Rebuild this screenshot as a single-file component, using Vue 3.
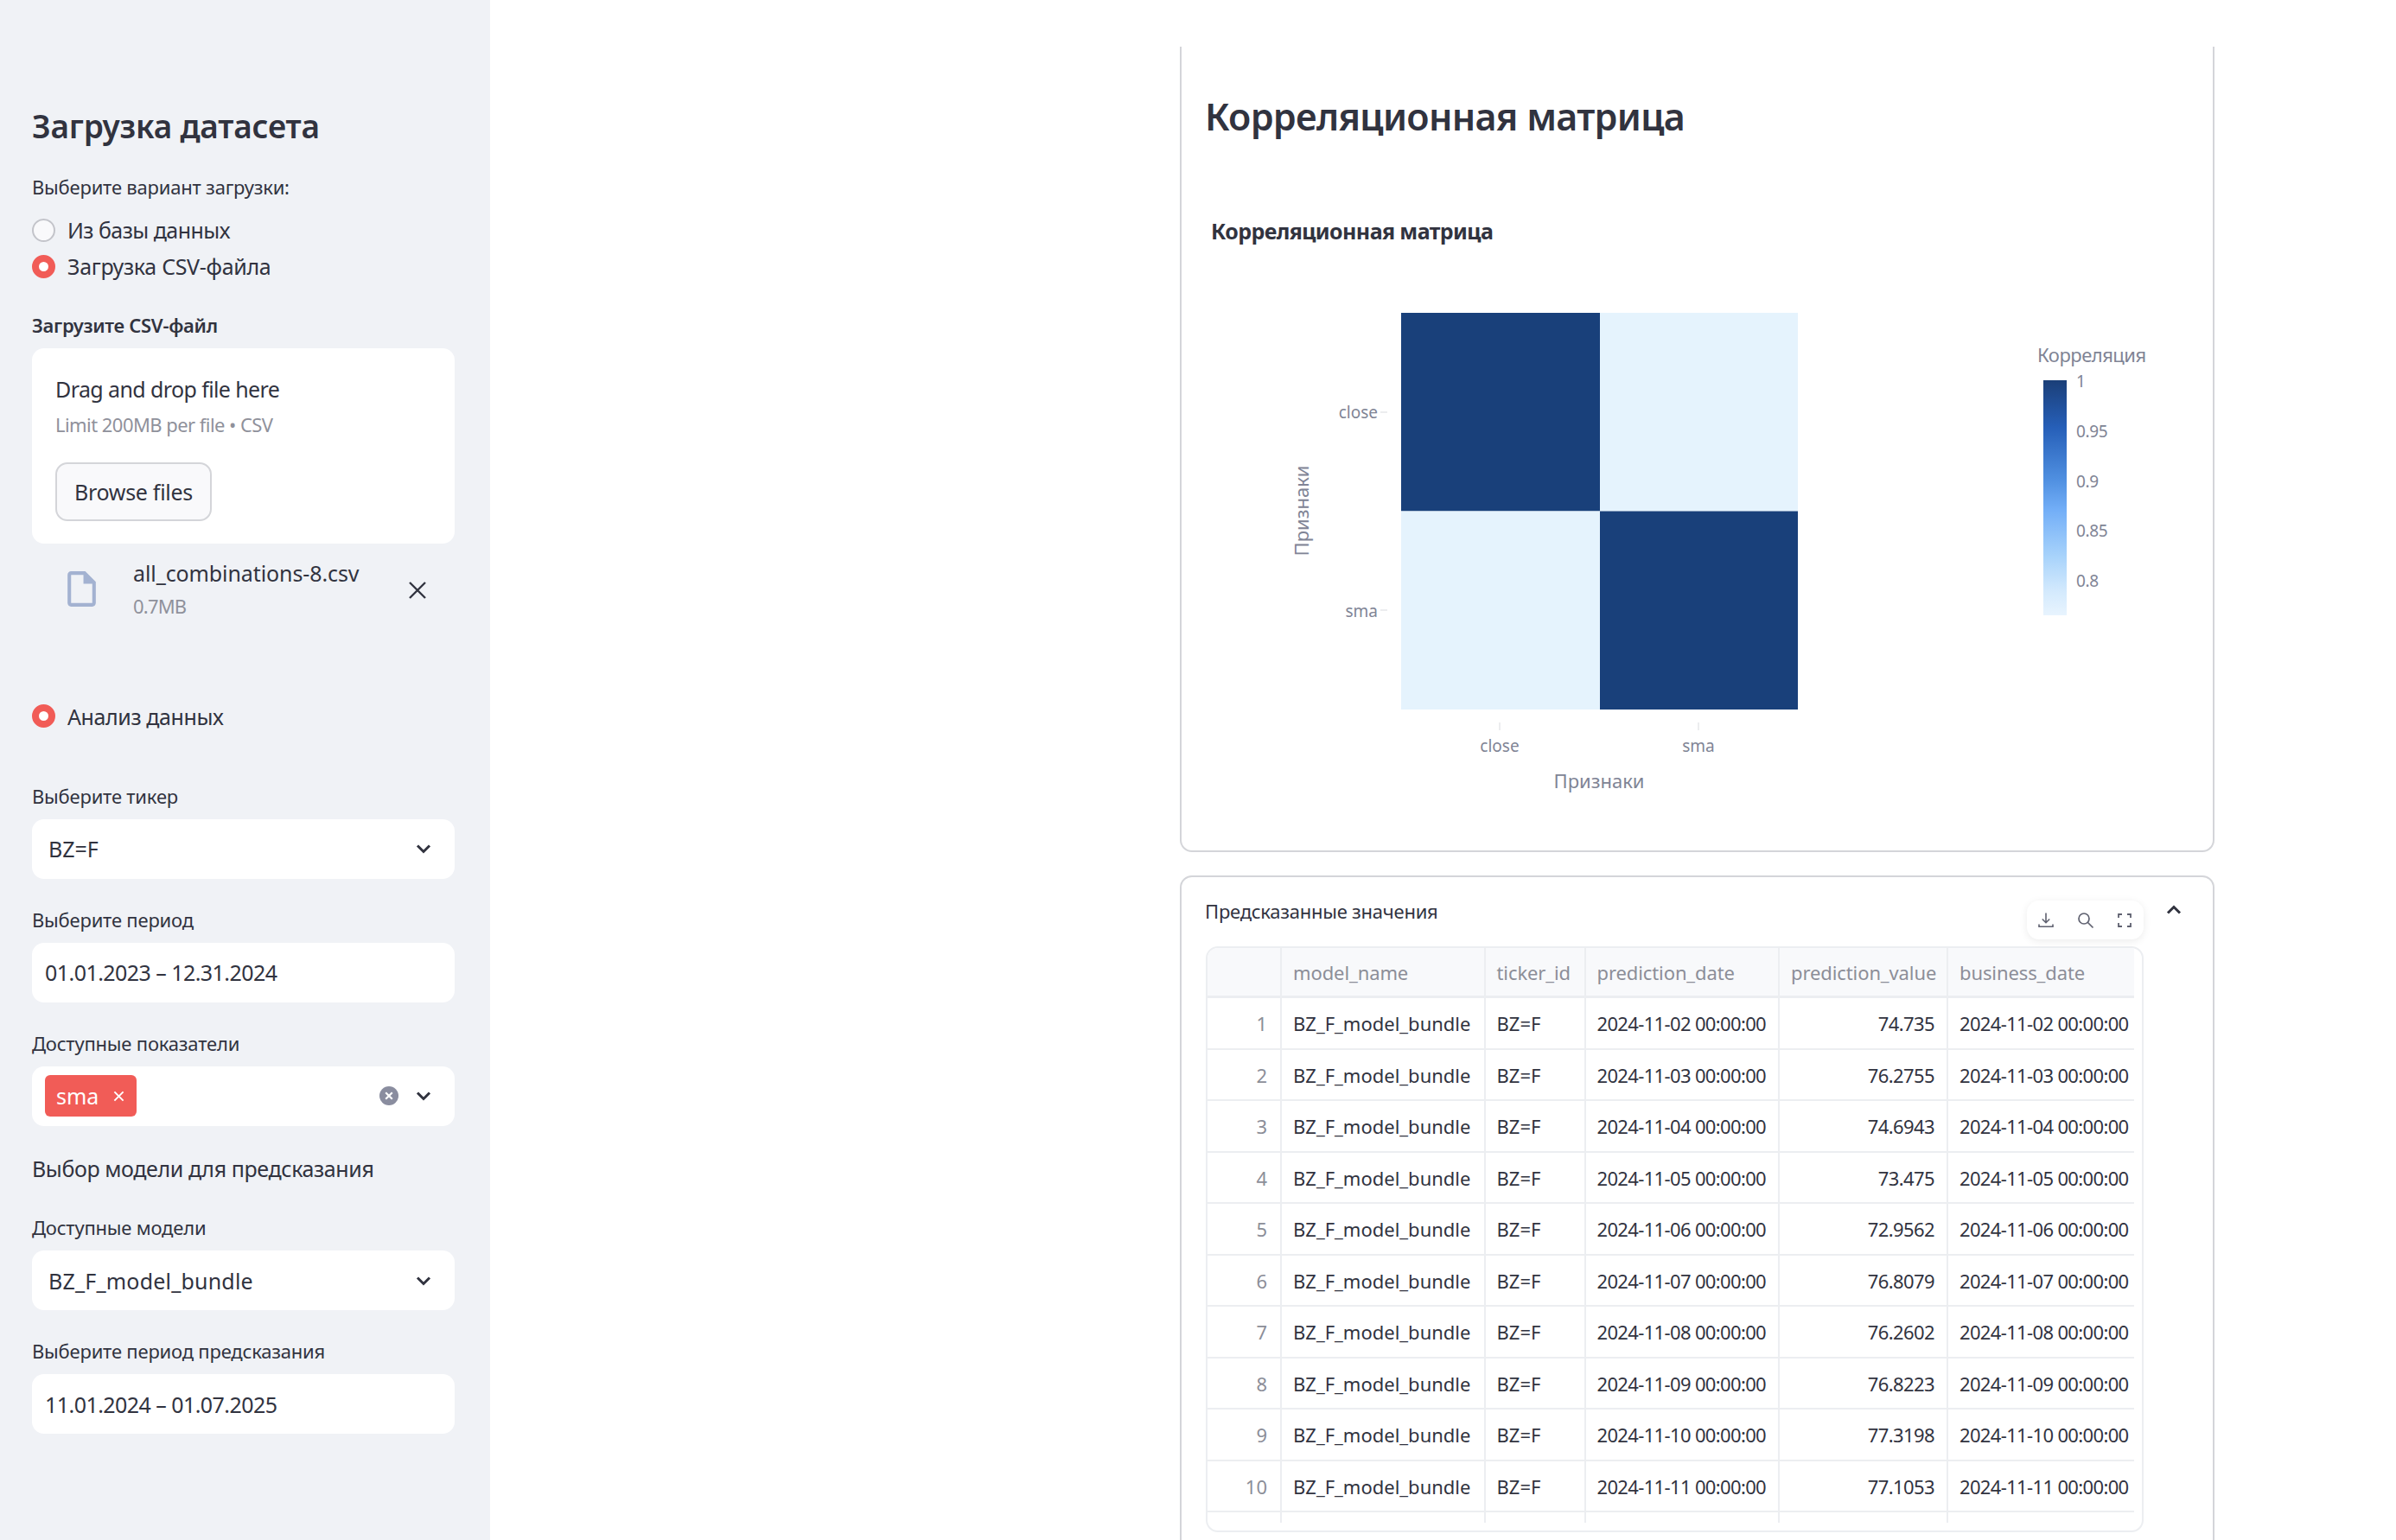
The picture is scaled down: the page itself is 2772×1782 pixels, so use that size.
<script setup>
const predictions = [
  ['2024-11-02 00:00:00', '74.735'],
  ['2024-11-03 00:00:00', '76.2755'],
  ['2024-11-04 00:00:00', '74.6943'],
  ['2024-11-05 00:00:00', '73.475'],
  ['2024-11-06 00:00:00', '72.9562'],
  ['2024-11-07 00:00:00', '76.8079'],
  ['2024-11-08 00:00:00', '76.2602'],
  ['2024-11-09 00:00:00', '76.8223'],
  ['2024-11-10 00:00:00', '77.3198'],
  ['2024-11-11 00:00:00', '77.1053'],
];
const columns = ['', 'model_name', 'ticker_id', 'prediction_date', 'prediction_value', 'business_date'];
const legendTicks = [
  { label: '1', y: 448 },
  { label: '0.95', y: 506 },
  { label: '0.9', y: 564 },
  { label: '0.85', y: 621 },
  { label: '0.8', y: 679 },
];
</script>

<template>
  <div class="page">
    <aside class="sidebar">
      <h2 class="side-title">Загрузка датасета</h2>

      <div class="label first">Выберите вариант загрузки:</div>
      <div class="radios">
        <div class="radio-row tight"><span class="radio"></span>Из базы данных</div>
        <div class="radio-row"><span class="radio on"></span>Загрузка CSV-файла</div>
      </div>

      <div class="label strong">Загрузите CSV-файл</div>
      <div class="dropzone">
        <div class="drop-title">Drag and drop file here</div>
        <div class="drop-hint">Limit 200MB per file • CSV</div>
        <button class="browse">Browse files</button>
      </div>
      <div class="file-row">
        <svg class="file-icon" viewBox="0 0 24 24" fill="#a3b2d1">
          <path d="M14 2H6c-1.1 0-2 .9-2 2v16c0 1.1.9 2 2 2h12c1.1 0 2-.9 2-2V8l-6-6zM6 20V4h7v5h5v11H6z" />
        </svg>
        <div class="file-info">
          <div class="file-name">all_combinations-8.csv</div>
          <div class="file-size">0.7MB</div>
        </div>
        <svg class="file-x" viewBox="0 0 20 20" fill="none" stroke="#31333f" stroke-width="2.4">
          <path d="M1 1l18 18M19 1L1 19" />
        </svg>
      </div>

      <div class="radio-row analysis"><span class="radio on"></span>Анализ данных</div>

      <div class="label ticker">Выберите тикер</div>
      <div class="control select">
        <span>BZ=F</span>
        <svg class="chevron" viewBox="0 0 18 12" fill="none" stroke="#31333f" stroke-width="3"><path d="M2 2.5l7 7 7-7" /></svg>
      </div>

      <div class="label">Выберите период</div>
      <div class="control date">01.01.2023 – 12.31.2024</div>

      <div class="label">Доступные показатели</div>
      <div class="control multi">
        <span class="chip">sma<svg viewBox="0 0 14 14" fill="none" stroke="#fff" stroke-width="2"><path d="M1.5 1.5l11 11M12.5 1.5l-11 11" /></svg></span>
        <svg class="clear" viewBox="0 0 22 22">
          <circle cx="11" cy="11" r="11" fill="#8a8d9f" />
          <path d="M7.2 7.2l7.6 7.6M14.8 7.2l-7.6 7.6" stroke="#fff" stroke-width="2.2" />
        </svg>
        <svg class="chevron" viewBox="0 0 18 12" fill="none" stroke="#31333f" stroke-width="3"><path d="M2 2.5l7 7 7-7" /></svg>
      </div>

      <div class="section">Выбор модели для предсказания</div>

      <div class="label">Доступные модели</div>
      <div class="control select">
        <span class="model">BZ_F_model_bundle</span>
        <svg class="chevron" viewBox="0 0 18 12" fill="none" stroke="#31333f" stroke-width="3"><path d="M2 2.5l7 7 7-7" /></svg>
      </div>

      <div class="label">Выберите период предсказания</div>
      <div class="control date">11.01.2024 – 01.07.2025</div>
    </aside>

    <main class="main">
      <section class="card chart-card">
        <h1 class="card-title">Корреляционная матрица</h1>
        <svg class="chart" viewBox="1367 200 1193 784">
          <defs>
            <linearGradient id="blues" x1="0" y1="0" x2="0" y2="1">
              <stop offset="0" stop-color="#1b3f78" />
              <stop offset="0.2" stop-color="#265fb8" />
              <stop offset="0.42" stop-color="#4f8fe0" />
              <stop offset="0.55" stop-color="#72aef7" />
              <stop offset="0.75" stop-color="#a8d3fb" />
              <stop offset="0.9" stop-color="#d4eafd" />
              <stop offset="1" stop-color="#e8f4fe" />
            </linearGradient>
          </defs>
          <text class="chart-title" x="1401" y="277">Корреляционная матрица</text>

          <rect x="1621" y="362" width="230" height="229.5" fill="#19407a" />
          <rect x="1851" y="362" width="229" height="229.5" fill="#e5f3fd" />
          <rect x="1621" y="591.5" width="230" height="229.5" fill="#e5f3fd" />
          <rect x="1851" y="591.5" width="229" height="229.5" fill="#19407a" />

          <path d="M1597 477h8M1597 706h8M1735 836v9M1965 836v9" stroke="#e6e7ea" stroke-width="1.5" />
          <text class="tick" x="1594" y="484" text-anchor="end">close</text>
          <text class="tick" x="1594" y="714" text-anchor="end">sma</text>
          <text class="tick" x="1735" y="870" text-anchor="middle">close</text>
          <text class="tick" x="1965" y="870" text-anchor="middle">sma</text>
          <text class="axis" x="1850" y="912" text-anchor="middle">Признаки</text>
          <text class="axis" transform="translate(1514 591) rotate(-90)" text-anchor="middle">Признаки</text>

          <text class="axis legend-title" x="2357" y="419">Корреляция</text>
          <rect x="2364" y="440" width="27" height="272" fill="url(#blues)" />
          <text v-for="t in legendTicks" :key="t.label" class="tick legend-tick" x="2402" :y="t.y">{{ t.label }}</text>
        </svg>
      </section>

      <section class="card table-card">
        <div class="table-title">Предсказанные значения</div>

        <div class="toolbar">
          <svg viewBox="0 0 20 20" fill="none" stroke="#5f6170" stroke-width="1.6">
            <path d="M10 1.5v11M5.8 8.5l4.2 4.2 4.2-4.2M2 14.5v2.7h16v-2.7" />
          </svg>
          <svg viewBox="0 0 20 20" fill="none" stroke="#5f6170" stroke-width="1.7">
            <circle cx="8" cy="8" r="6" />
            <path d="M12.5 12.5l6 6" />
          </svg>
          <svg viewBox="0 0 20 20" fill="none" stroke="#5f6170" stroke-width="1.8">
            <path d="M3 7V3h4M13 3h4v4M17 13v4h-4M7 17H3v-4" />
          </svg>
        </div>
        <svg class="collapse" viewBox="0 0 18 12" fill="none" stroke="#31333f" stroke-width="3"><path d="M2 9.5l7-7 7 7" /></svg>

        <div class="table-frame">
          <div class="table">
            <div class="row head">
              <div v-for="c in columns" :key="c" class="cell">{{ c }}</div>
            </div>
            <div v-for="(p, i) in predictions" :key="p[0]" class="row">
              <div class="cell idx">{{ i + 1 }}</div>
              <div class="cell">BZ_F_model_bundle</div>
              <div class="cell">BZ=F</div>
              <div class="cell stamp">{{ p[0] }}</div>
              <div class="cell num">{{ p[1] }}</div>
              <div class="cell stamp">{{ p[0] }}</div>
            </div>
            <div class="row">
              <div v-for="n in 6" :key="n" class="cell"></div>
            </div>
          </div>
        </div>
      </section>
    </main>
  </div>
</template>

<style>
html, body {
  margin: 0;
  overflow: hidden;
  background: #fff;
}
</style>

<style scoped>
.page {
  display: flex;
  width: 2772px;
  height: 1782px;
  overflow: hidden;
  font-family: "Noto Sans", "Liberation Sans", sans-serif;
  color: #31333f;
}

/* SIDEBAR */
.sidebar {
  box-sizing: border-box;
  width: 567px;
  flex-shrink: 0;
  padding: 121px 41px 0 37px;
  background: #f0f2f6;
}

.side-title {
  margin: 0 0 1px;
  font-size: 37px;
  line-height: 50px;
  font-weight: 600;
  letter-spacing: -0.2px;
}

.label {
  margin-top: 30.2px;
  padding-bottom: 1.5px;
  font-size: 22px;
  line-height: 34px;
  letter-spacing: -0.2px;
}

.label.first {
  margin-top: 27.5px;
}

.label.strong {
  margin-top: 29.5px;
  font-weight: 600;
  letter-spacing: -0.3px;
}

.label.ticker {
  margin-top: 54.5px;
}

.radios {
  margin-top: 11px;
}

.radio-row {
  display: flex;
  align-items: center;
  gap: 14px;
  height: 42px;
  font-size: 25px;
  letter-spacing: -0.3px;
}

.radio-row.tight {
  letter-spacing: -0.55px;
}

.radio-row.analysis {
  margin-top: 88.5px;
  letter-spacing: -0.4px;
}

.radio {
  box-sizing: border-box;
  width: 27px;
  height: 27px;
  border: 2px solid #c3c4ca;
  border-radius: 50%;
  background: #f9f9fb;
}

.radio.on {
  border: 8.5px solid #f15c57;
  background: #fff;
}

.dropzone {
  box-sizing: border-box;
  height: 226px;
  margin-top: 9px;
  padding: 29px 27px 0;
  border-radius: 14px;
  background: #fff;
}

.drop-title {
  padding-bottom: 2px;
  font-size: 25px;
  line-height: 36px;
  letter-spacing: -0.6px;
}

.drop-hint {
  margin-top: 5px;
  padding-bottom: 2px;
  font-size: 22px;
  line-height: 32px;
  letter-spacing: -0.55px;
  color: #8f919b;
}

.browse {
  display: block;
  box-sizing: border-box;
  width: 181px;
  height: 68px;
  margin-top: 26px;
  padding: 0;
  border: 2px solid #d4d5d9;
  border-radius: 14px;
  background: #f9f9fb;
  font: inherit;
  font-size: 25px;
  letter-spacing: -0.3px;
  color: #31333f;
}

.file-row {
  display: flex;
  align-items: center;
  margin-top: 18px;
  padding: 0 33px;
}

.file-icon {
  width: 49px;
  height: 49px;
  margin-top: -3px;
  flex-shrink: 0;
}

.file-info {
  margin: -2px 0 2px 35px;
}

.file-name {
  font-size: 25px;
  line-height: 36px;
  letter-spacing: -0.1px;
}

.file-size {
  margin-top: 4px;
  font-size: 22px;
  line-height: 32px;
  letter-spacing: -0.8px;
  color: #8f919b;
}

.file-x {
  width: 20px;
  height: 20px;
  margin-left: auto;
}

.control {
  box-sizing: border-box;
  display: flex;
  align-items: center;
  height: 68.6px;
  margin-top: 8.7px;
  border-radius: 14px;
  background: #fff;
  font-size: 25px;
}

.select {
  padding-left: 19px;
}

.model {
  letter-spacing: 0.2px;
}

.date {
  padding-left: 15px;
  letter-spacing: -0.55px;
}

.multi {
  padding-left: 15px;
}

.chevron {
  width: 18px;
  height: 12px;
  margin-left: auto;
  margin-right: 27px;
}

.chip {
  display: flex;
  align-items: center;
  justify-content: space-between;
  box-sizing: border-box;
  width: 106px;
  height: 48px;
  padding: 0 14px 0 13px;
  border-radius: 6px;
  background: #f15c57;
  color: #fff;
  font-size: 25px;
}

.chip svg {
  width: 13px;
  height: 13px;
}

.clear {
  width: 22px;
  height: 22px;
  margin-left: auto;
}

.clear + .chevron {
  margin-left: 20px;
}

.section {
  margin-top: 29px;
  font-size: 25px;
  line-height: 40px;
  letter-spacing: -0.4px;
}

.section + .label {
  margin-top: 31.5px;
}

/* MAIN */
.main {
  width: 1197px;
  margin-left: 798px;
  padding-top: 54px;
}

.card {
  box-sizing: border-box;
  border: 2px solid #d4d5d9;
  border-radius: 14px;
}

.chart-card {
  height: 932px;
  border-top: none;
  border-top-left-radius: 0;
  border-top-right-radius: 0;
}

.card-title {
  margin: 0;
  padding: 51px 0 0 27px;
  font-size: 43px;
  line-height: 60px;
  font-weight: 600;
  letter-spacing: -0.7px;
}

.chart {
  display: block;
  width: 1193px;
  height: 784px;
  margin-top: 35px;
}

.chart-title {
  font-size: 25px;
  font-weight: 700;
  letter-spacing: -0.6px;
  fill: #31333f;
}

.tick {
  font-size: 19px;
  fill: #808495;
}

.legend-tick {
  letter-spacing: -0.4px;
}

.axis {
  font-size: 22px;
  fill: #808495;
}

.legend-title {
  letter-spacing: -0.5px;
}

.table-card {
  position: relative;
  height: 800px;
  margin-top: 27px;
  padding: 21px 0 0 28px;
}

.table-title {
  margin-left: -1px;
  font-size: 22px;
  line-height: 36px;
  letter-spacing: -0.25px;
}

.toolbar {
  position: absolute;
  top: 27px;
  right: 80px;
  display: flex;
  align-items: center;
  justify-content: space-between;
  box-sizing: border-box;
  width: 135px;
  height: 45px;
  padding: 0 12px;
  border-radius: 14px;
  background: #fff;
  box-shadow: 0 2px 10px rgba(0, 0, 0, 0.08);
  z-index: 1;
}

.toolbar svg {
  width: 20px;
  height: 20px;
}

.collapse {
  position: absolute;
  top: 32px;
  right: 36px;
  width: 18px;
  height: 12px;
}

.table-frame {
  box-sizing: border-box;
  width: 1085px;
  height: 678px;
  margin-top: 23px;
  border: 2px solid #eceef1;
  border-radius: 14px;
  overflow: hidden;
}

.table {
  width: 1072px;
  height: 665px;
  overflow: hidden;
  font-size: 22px;
}

.row {
  display: grid;
  grid-template-columns: 86px 235.5px 116px 224.5px 195px 215px;
  height: 59.5px;
  box-sizing: border-box;
  border-bottom: 2px solid #eceef1;
}

.row.head {
  height: 58px;
  border-bottom-width: 3px;
  background: #f8f9fb;
  color: #8c8e98;
  letter-spacing: -0.1px;
}

.cell {
  display: flex;
  align-items: center;
  padding: 1px 0 0 13px;
  overflow: hidden;
  white-space: nowrap;
  border-right: 2px solid #eceef1;
  box-sizing: border-box;
}

.cell:last-child {
  border-right: none;
}

.cell.stamp {
  letter-spacing: -0.65px;
}

.cell.idx {
  justify-content: flex-end;
  padding: 1px 15px 0 0;
  color: #8c8e98;
}

.cell.num {
  justify-content: flex-end;
  padding: 1px 14px 0 0;
  letter-spacing: -0.6px;
}
</style>
